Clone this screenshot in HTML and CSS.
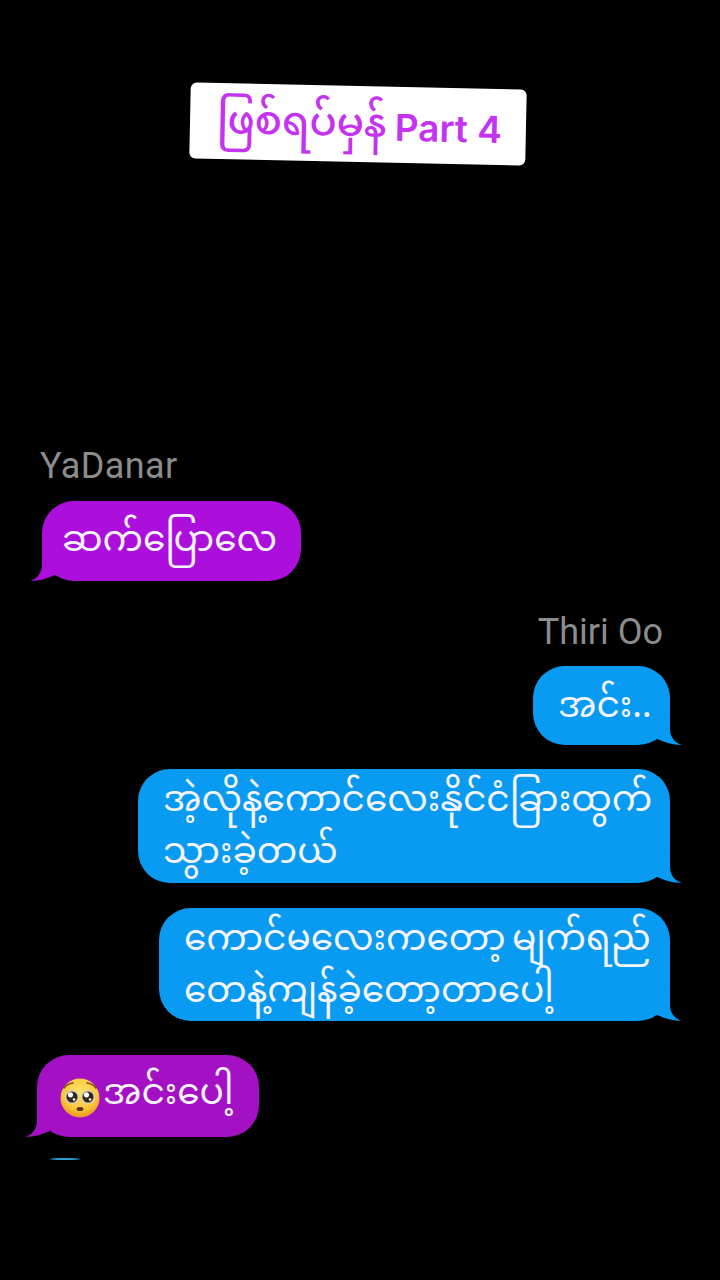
FILE: index.html
```html
<!DOCTYPE html>
<html>
	<head>
		<meta charset="utf-8">
		<title>ဖြစ်ရပ်မှန် Part 4</title>
		<link rel="stylesheet" href="styles.css">
	</head>
	<body>
		<div class="titleCard">
			<span class="titleText">ဖြစ်ရပ်မှန်</span>
			<span class="titlePart">Part 4</span>
		</div>
		<div class="chat">
			<div class="name nameLeft">YaDanar</div>
			<div class="row rowLeft">
				<div class="bubble purple first">ဆက်ပြောလေ<svg class="tail tailLeft" viewBox="0 0 30 30"><path d="M12 0V14C12 22 7 28 0 30C9 30 18 27 25 24L30 10Z"/></svg></div>
			</div>
			<div class="name nameRight">Thiri Oo</div>
			<div class="row rowRight">
				<div class="bubble blue short">အင်း..<svg class="tail tailRight" viewBox="0 0 30 30"><path d="M18 0V14C18 22 23 28 30 30C21 30 12 27 5 24L0 10Z"/></svg></div>
			</div>
			<div class="row rowRight">
				<div class="bubble blue wide">အဲ့လိုနဲ့ကောင်လေးနိုင်ငံခြားထွက်<br>သွားခဲ့တယ်<svg class="tail tailRight" viewBox="0 0 30 30"><path d="M18 0V14C18 22 23 28 30 30C21 30 12 27 5 24L0 10Z"/></svg></div>
			</div>
			<div class="row rowRight">
				<div class="bubble blue medium">ကောင်မလေးကတော့ မျက်ရည်<br>တေနဲ့ကျန်ခဲ့တော့တာပေါ့<svg class="tail tailRight" viewBox="0 0 30 30"><path d="M18 0V14C18 22 23 28 30 30C21 30 12 27 5 24L0 10Z"/></svg></div>
			</div>
			<div class="row rowLeft">
				<div class="bubble violet last"><svg class="emoji" viewBox="0 0 40 40">
					<defs><radialGradient id="face" cx="50%" cy="35%" r="65%"><stop offset="0" stop-color="#fde468"/><stop offset="0.7" stop-color="#f8c63c"/><stop offset="1" stop-color="#e8961c"/></radialGradient></defs>
					<circle cx="20" cy="20" r="19.5" fill="url(#face)"/>
					<path d="M4 10C6 7 9 5.500 13 5M36 10C34 7 31 5.500 27 5" fill="none" stroke="#7a4a12" stroke-width="1.500" stroke-linecap="round"/>
					<circle cx="12" cy="19" r="7" fill="#d8cdb4"/><circle cx="28" cy="19" r="7" fill="#d8cdb4"/>
					<circle cx="12" cy="19" r="5.500" fill="#33261c"/><circle cx="28" cy="19" r="5.500" fill="#33261c"/>
					<circle cx="10.500" cy="16.800" r="2.600" fill="#fff"/><circle cx="26.500" cy="16.800" r="2.600" fill="#fff"/>
					<circle cx="14" cy="21.500" r="1.300" fill="#fff"/><circle cx="30" cy="21.500" r="1.300" fill="#fff"/>
					<ellipse cx="20" cy="31" rx="3.500" ry="2" fill="#5f3412"/>
				</svg>အင်းပေါ့<svg class="tail tailLeft" viewBox="0 0 30 30"><path d="M12 0V14C12 22 7 28 0 30C9 30 18 27 25 24L30 10Z"/></svg></div>
			</div>
			<div class="sliver"></div>
		</div>
	</body>
</html>
```

FILE: styles.css
```css
html,body{
	margin:0;
	height:1280px;
	overflow:hidden;
	background:#000;
}
body{
	font-family:"Noto Sans Myanmar","Padauk","Myanmar Text","Noto Sans","DejaVu Sans",sans-serif;
}
.titleCard{
	width:336px;
	height:76px;
	margin:86px 0 0 190px;
	padding:4px 0 0 3px;
	box-sizing:border-box;
	background:#fff;
	border-radius:6px;
	transform:rotate(1.2deg);
	display:flex;
	align-items:center;
	justify-content:center;
	gap:8px;
	color:#c433f0;
	white-space:nowrap;
}
.titleText{
	font-size:40px;
	font-weight:500;
}
.titlePart{
	font-family:Inter,"Noto Sans",sans-serif;
	font-size:37px;
	font-weight:600;
}
.chat{
	display:flex;
	flex-direction:column;
	margin-top:286px;
}
.name{
	font-family:Roboto,sans-serif;
	font-size:36px;
	line-height:36px;
	color:#8c8c8c;
}
.nameLeft{margin-left:40px;letter-spacing:.4px;}
.nameRight{text-align:right;margin:33px 57px 0 0;}
.row{display:flex;}
.rowLeft{justify-content:flex-start;}
.rowRight{justify-content:flex-end;padding-right:50px;}
.bubble{
	position:relative;
	box-sizing:border-box;
	color:#f4f4fa;
	font-size:36px;
	line-height:52px;
	white-space:nowrap;
	border-radius:32px;
}
.purple{background:#ac0fdb;fill:#ac0fdb;}
.violet{background:#a410c4;fill:#a410c4;}
.blue{background:#089bf1;fill:#089bf1;}
.first{width:259px;height:80px;margin:17px 0 0 42px;padding:16px 0 0 20px;}
.short{width:137px;height:79px;margin-top:16px;padding:17px 0 0 25px;}
.wide{width:532px;height:114px;margin-top:24px;padding:8px 0 0 25px;}
.medium{width:511px;height:113px;margin-top:25px;padding:8px 0 0 25px;word-spacing:-3px;}
.last{display:flex;align-items:center;width:222px;height:82px;margin:34px 0 0 37px;padding:0 0 0 23px;}
.tail{position:absolute;bottom:0;width:30px;height:30px;}
.tailLeft{left:-12px;}
.tailRight{right:-12px;}
.emoji{width:40px;height:40px;flex:none;margin:4px 3px 0 0;}
.sliver{
	width:30px;
	height:2px;
	margin:21px 0 0 50px;
	border-radius:50%;
	background:#2e9fd8;
}
```
